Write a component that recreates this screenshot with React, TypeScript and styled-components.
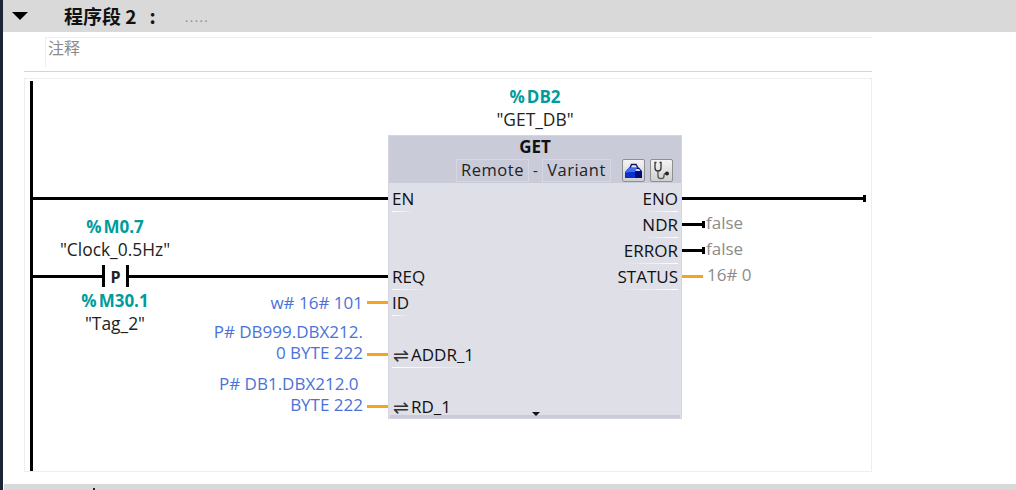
import React from "react";
import styled, { createGlobalStyle } from "styled-components";

const Global = createGlobalStyle`
  html, body { margin: 0; padding: 0; background: #fff; overflow: hidden; }
  body { font-family: "Open Sans", "Noto Sans", "Noto Sans CJK SC", sans-serif; font-size: 17px; color: #111; }
`;

const Page = styled.div`
  width: 1016px; height: 490px; overflow: hidden; box-sizing: border-box;
  border-left: 3px solid #1d2433; background: #fff;
  display: flex; flex-direction: column;
`;
const NetworkHeader = styled.header`
  height: 32px; flex: none; background: #d9d9d9; display: flex; align-items: center;
`;
const Collapse = styled.span`
  width: 0; height: 0; margin-left: 9px; margin-top: -1px;
  border-left: 8px solid transparent; border-right: 8px solid transparent; border-top: 8px solid #000;
`;
const NetworkTitle = styled.h2`
  margin: 0 0 0 36px; width: 121px; font-size: 19px; font-weight: 700;
  font-family: "Noto Sans CJK SC", "Noto Sans", sans-serif; color: #111; line-height: 32px; white-space: pre;
`;
const NetworkName = styled.span`
  font-size: 13px; letter-spacing: 1.4px; color: #8a8a8a; margin-top: 2px;
`;
const CommentBox = styled.div`
  flex: none; margin: 5px 0 0 42px; width: 827px; height: 30px; box-sizing: border-box;
  border-top: 1px solid #eeeeee; border-left: 1px solid #eeeeee;
  font-size: 16px; color: #8a8a8a; line-height: 18px; padding: 0 0 0 2px;
  font-family: "Noto Sans CJK SC", sans-serif;
`;
const Divider = styled.div`
  flex: none; margin: 4px 0 0 21px; width: 848px; height: 1px; background: #d4d2de;
`;
const Diagram = styled.div`
  flex: none; margin: 6px 0 0 21px; width: 848px; height: 394px; box-sizing: border-box;
  border: 1px solid #eeeeee; background: #fff; padding: 2px 0 0 5px;
`;
const Rung = styled.div`
  height: 390px; border-left: 3px solid #000; display: grid; grid-template-columns: 355px 294px 1fr;
`;
const NextHeader = styled.div`
  flex: none; position: relative; margin: 12px 0 0 1px; height: 6px; background: #d9d9d9;
  &::after { content: ""; position: absolute; left: 89px; top: 4px; width: 2px; height: 2px; background: #222; }
`;

const LeftSide = styled.div`
  padding-top: 105px; display: flex; flex-direction: column;
`;
const RightSide = styled.div`
  padding-top: 105px; display: flex; flex-direction: column;
`;
const BlockSide = styled.div`
  padding-top: 5px; display: flex; flex-direction: column;
`;
const WireRow = styled.div`
  height: 26px; flex: none; display: flex; align-items: flex-start;
`;
const Wire = styled.div<{ $w?: number; $data?: boolean }>`
  margin-top: 11px; height: 3px; flex: ${p => (p.$w ? `0 0 ${p.$w}px` : "1")};
  background: ${p => (p.$data ? "#f5a51c" : "#000")};
`;
const Terminator = styled.div`
  margin: 9px 0 0 -1px; width: 3px; height: 7px; background: #000; flex: none;
`;
const ContactBar = styled.div`
  margin-top: 1px; width: 3px; height: 22px; background: #000; flex: none;
`;
const ContactLetter = styled.div`
  width: 21px; flex: none; text-align: center; font-weight: 700; font-size: 16px; line-height: 26px; color: #222;
`;
const TagGroup = styled.div<{ $top?: number; $full?: boolean }>`
  width: ${p => (p.$full ? "100%" : "164px")}; flex: none; box-sizing: border-box; padding-top: ${p => p.$top ?? 0}px;
  display: flex; flex-direction: column; align-items: center;
`;
const UpperLabels = styled.div`
  height: 52px; flex: none;
`;
const Address = styled.div`
  line-height: 22px; font-size: 17px; font-weight: 700; color: #009c9c; white-space: nowrap;
  span { margin-right: 2px; }
`;
const Symbol = styled.div`
  line-height: 22px; font-size: 17.4px; color: #222; white-space: nowrap;
`;
const LowerArea = styled.div`
  display: flex;
`;
const Operands = styled.div`
  flex: 1; display: flex; flex-direction: column;
`;
const OperandRow = styled.div<{ $tall?: boolean }>`
  height: ${p => (p.$tall ? 52 : 26)}px; flex: none; display: flex; justify-content: flex-end; align-items: flex-end;
`;
const OperandStub = styled.div`
  width: 21px; height: 3px; margin: 0 0 12px 4px; flex: none; background: #f5a51c;
`;
const OperandText = styled.div<{ $pad: number }>`
  padding-bottom: ${p => p.$pad}px; font-size: 17px; line-height: 21px; color: #4a72d8; text-align: right; white-space: pre;
`;
const OutputText = styled.div<{ $gap: number }>`
  margin-left: ${p => p.$gap}px; font-size: 17px; line-height: 22px; color: #8c8c8c; white-space: pre;
`;

const Block = styled.div`
  position: relative; margin-top: 5px; height: 284px; box-sizing: border-box;
  border: 1px solid #d6d6e2; background: #dfdfe8; overflow: hidden;
`;
const BlockHead = styled.div`
  height: 47px; background: #c9cbd9; display: grid; grid-template-rows: 22px 25px; justify-items: center;
`;
const BlockName = styled.div`
  font-weight: 700; font-size: 17px; line-height: 22px; color: #111;
`;
const HeadRow = styled.div`
  display: flex; align-items: flex-start; justify-self: start; margin: 1px 0 0 67px; color: #222;
`;
const Tag = styled.span<{ $w: number }>`
  width: ${p => p.$w}px; height: 23px; box-sizing: border-box; border: 1px solid #d6d7e2; text-align: center;
  line-height: 20px; font-size: 16.5px; letter-spacing: 0.5px;
`;
const Dash = styled.span`
  width: 13px; text-align: center; line-height: 22px; font-size: 15px;
`;
const IconButton = styled.span<{ $gap: number }>`
  width: 23px; height: 23px; box-sizing: border-box; margin-left: ${p => p.$gap}px; border: 1px solid #8f8f8f; border-radius: 2px;
  background: linear-gradient(#f4f4f4, #cfcfcf); display: flex; align-items: center; justify-content: center;
`;
const Pins = styled.div`
  display: grid; grid-template-columns: 1fr 1fr; grid-template-rows: repeat(9, 26px); margin-top: 3px;
`;
const Pin = styled.div<{ $row: number; $right?: boolean }>`
  grid-row: ${p => p.$row}; grid-column: ${p => (p.$right ? 2 : 1)};
  justify-self: ${p => (p.$right ? "end" : "start")};
  margin: ${p => (p.$right ? "0 3px 0 0" : "0 0 0 3px")};
  position: relative; display: flex; align-items: center; line-height: 26px; font-size: 17px; color: #111; white-space: nowrap;
  &::after {
    content: ""; position: absolute; bottom: 0; left: 0; right: 0; height: 1px;
    background: linear-gradient(${p => (p.$right ? "to left" : "to right")}, #fff, #dfdfe8);
  }
`;
const InOut = styled.span`
  font-family: "DejaVu Sans", sans-serif; font-size: 19px; width: 18px; margin-left: 1px; line-height: 26px; color: #333;
`;
const BlockFoot = styled.div`
  position: absolute; left: 1px; right: 1px; bottom: 0; height: 3px; background: #c9cbd9;
  &::after {
    content: ""; position: absolute; left: 142px; top: -3px; width: 0; height: 0;
    border-left: 4px solid transparent; border-right: 4px solid transparent; border-top: 4px solid #111;
  }
`;

const ToolboxIcon = () => (
  <svg width="19" height="16" viewBox="0 0 19 16">
    <path d="M6 5 L7.5 1.5 H12 L14 5" fill="none" stroke="#101070" strokeWidth="1.4" />
    <path d="M1 15 V9 L5 4.5 H15 L18 8 V15 Z" fill="#0a2fd0" />
    <path d="M1 10 L5 5 H13 L11 9 H5 Z" fill="#3f6cf0" />
    <path d="M11 9 L13 5 H15 L18 9 V15 H11 Z" fill="#050a80" />
    <path d="M12 6 H15 L16.5 8 H11.5 Z" fill="#d8dcf0" />
  </svg>
);
const StethoscopeIcon = () => (
  <svg width="19" height="20" viewBox="0 0 19 20">
    <path d="M4.5 1.5 H3 V7 C3 11 9 11 9 7 V1.5 H7.5" fill="none" stroke="#333" strokeWidth="1.3" />
    <path d="M6 10 V15 C6 18.5 12 18.5 12 15 V14 C12 13 13 12.5 14 12.5" fill="none" stroke="#555" strokeWidth="1.3" />
    <circle cx="15" cy="12.5" r="2" fill="#222" />
  </svg>
);

export default function App() {
  return (
    <Page>
      <Global />
      <NetworkHeader>
        <Collapse />
        <NetworkTitle>程序段 2   :</NetworkTitle>
        <NetworkName>.....</NetworkName>
      </NetworkHeader>
      <CommentBox>注释</CommentBox>
      <Divider />
      <Diagram>
        <Rung>
          <LeftSide>
            <WireRow><Wire /></WireRow>
            <UpperLabels>
              <TagGroup $top={4}>
                <Address><span>%</span>M0.7</Address>
                <Symbol>"Clock_0.5Hz"</Symbol>
              </TagGroup>
            </UpperLabels>
            <WireRow>
              <Wire $w={69} />
              <ContactBar />
              <ContactLetter>P</ContactLetter>
              <ContactBar />
              <Wire />
            </WireRow>
            <LowerArea>
              <TagGroup>
                <Address><span>%</span>M30.1</Address>
                <Symbol>"Tag_2"</Symbol>
              </TagGroup>
              <Operands>
                <OperandRow>
                  <OperandText $pad={3}>w# 16# 101</OperandText>
                  <OperandStub />
                </OperandRow>
                <OperandRow $tall>
                  <OperandText $pad={5}>P# DB999.DBX212.{"\n"}0 BYTE 222</OperandText>
                  <OperandStub />
                </OperandRow>
                <OperandRow $tall>
                  <OperandText $pad={5}>P# DB1.DBX212.0 {"\n"}BYTE 222</OperandText>
                  <OperandStub />
                </OperandRow>
              </Operands>
            </LowerArea>
          </LeftSide>
          <BlockSide>
            <TagGroup $full>
              <Address><span>%</span>DB2</Address>
              <Symbol>"GET_DB"</Symbol>
            </TagGroup>
            <Block>
              <BlockHead>
                <BlockName>GET</BlockName>
                <HeadRow>
                  <Tag $w={73}>Remote</Tag>
                  <Dash>-</Dash>
                  <Tag $w={69}>Variant</Tag>
                  <IconButton $gap={11}><ToolboxIcon /></IconButton>
                  <IconButton $gap={5}><StethoscopeIcon /></IconButton>
                </HeadRow>
              </BlockHead>
              <Pins>
                <Pin $row={1}>EN</Pin>
                <Pin $row={4}>REQ</Pin>
                <Pin $row={5}>ID</Pin>
                <Pin $row={7}><InOut>⇌</InOut>ADDR_1</Pin>
                <Pin $row={9}><InOut>⇌</InOut>RD_1</Pin>
                <Pin $row={1} $right>ENO</Pin>
                <Pin $row={2} $right>NDR</Pin>
                <Pin $row={3} $right>ERROR</Pin>
                <Pin $row={4} $right>STATUS</Pin>
              </Pins>
              <BlockFoot />
            </Block>
          </BlockSide>
          <RightSide>
            <WireRow><Wire $w={182} /><Terminator /></WireRow>
            <WireRow><Wire $w={21} /><Terminator /><OutputText $gap={1}>false</OutputText></WireRow>
            <WireRow><Wire $w={21} /><Terminator /><OutputText $gap={1}>false</OutputText></WireRow>
            <WireRow><Wire $w={21} $data /><OutputText $gap={4}>16# 0</OutputText></WireRow>
          </RightSide>
        </Rung>
      </Diagram>
      <NextHeader />
    </Page>
  );
}
